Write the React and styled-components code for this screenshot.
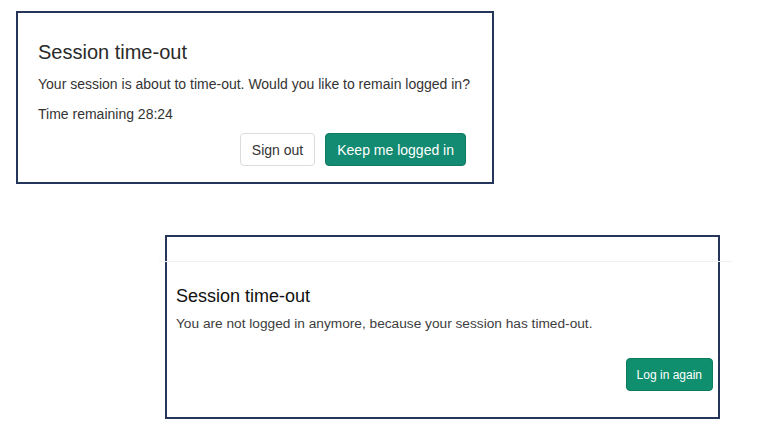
import styled, { createGlobalStyle } from "styled-components";

const GlobalStyle = createGlobalStyle`
  body {
    margin: 0;
    background: #ffffff;
    font-family: "Liberation Sans", Arial, sans-serif;
  }
`;

export default function App() {
  return (
    <>
      <GlobalStyle />
      <Page>
        <WarningCard>
          <Title>Session time-out</Title>
          <Text>Your session is about to time-out. Would you like to remain logged in?</Text>
          <Text>Time remaining 28:24</Text>
          <Actions>
            <Button>Sign out</Button>
            <Button $primary>Keep me logged in</Button>
          </Actions>
        </WarningCard>

        <ExpiredCard>
          <HeaderBar />
          <Title $small>Session time-out</Title>
          <Text $muted>You are not logged in anymore, because your session has timed-out.</Text>
          <Actions $end>
            <Button $primary $compact>Log in again</Button>
          </Actions>
        </ExpiredCard>
      </Page>
    </>
  );
}

const Page = styled.div`
  width: 758px;
  height: 428px;
  box-sizing: border-box;
  padding: 11px 0 0 16px;
  display: flex;
  flex-direction: column;
  align-items: flex-start;
`;

const Card = styled.div`
  box-sizing: border-box;
  border: 2px solid #26365a;
  background: #ffffff;
  display: flex;
  flex-direction: column;
`;

const WarningCard = styled(Card)`
  width: 478px;
  height: 173px;
  padding: 27px 26px 0 20px;
`;

const ExpiredCard = styled(Card)`
  width: 555px;
  height: 184px;
  margin: 51px 0 0 149px;
  padding: 0 5px 0 9px;
`;

const HeaderBar = styled.div`
  height: 24px;
  margin: 0 -19px 0 -17px;
  border-bottom: 1px solid #f1f1f1;
`;

const Title = styled.h2`
  margin: ${(p) => (p.$small ? "23px 0 7px" : "0 0 10px")};
  font-size: ${(p) => (p.$small ? "18px" : "20px")};
  line-height: ${(p) => (p.$small ? "22px" : "24px")};
  font-weight: 400;
  color: ${(p) => (p.$small ? "#111111" : "#2a2a2a")};
`;

const Text = styled.p`
  margin: 0 0 10px;
  font-size: ${(p) => (p.$muted ? "13.7px" : "14px")};
  line-height: 20px;
  white-space: nowrap;
  color: ${(p) => (p.$muted ? "#3d3d3d" : "#333333")};
`;

const Actions = styled.div`
  display: flex;
  justify-content: flex-end;
  gap: 10px;
  margin-top: ${(p) => (p.$end ? "14px" : "-1px")};
`;

const Button = styled.button`
  box-sizing: border-box;
  height: 33px;
  padding: 0 ${(p) => (p.$compact ? "10px" : "11px")};
  border-radius: 4px;
  font-family: "Liberation Sans", Arial, sans-serif;
  font-size: ${(p) => (p.$compact ? "12px" : "14px")};
  border: 1px solid ${(p) => (p.$primary ? (p.$compact ? "#0b7a5d" : "#117a65") : "#dcdcdc")};
  background: ${(p) => (p.$primary ? (p.$compact ? "#0f8f6d" : "#138a72") : "#ffffff")};
  color: ${(p) => (p.$primary ? "#ffffff" : "#333333")};
  cursor: pointer;
`;
